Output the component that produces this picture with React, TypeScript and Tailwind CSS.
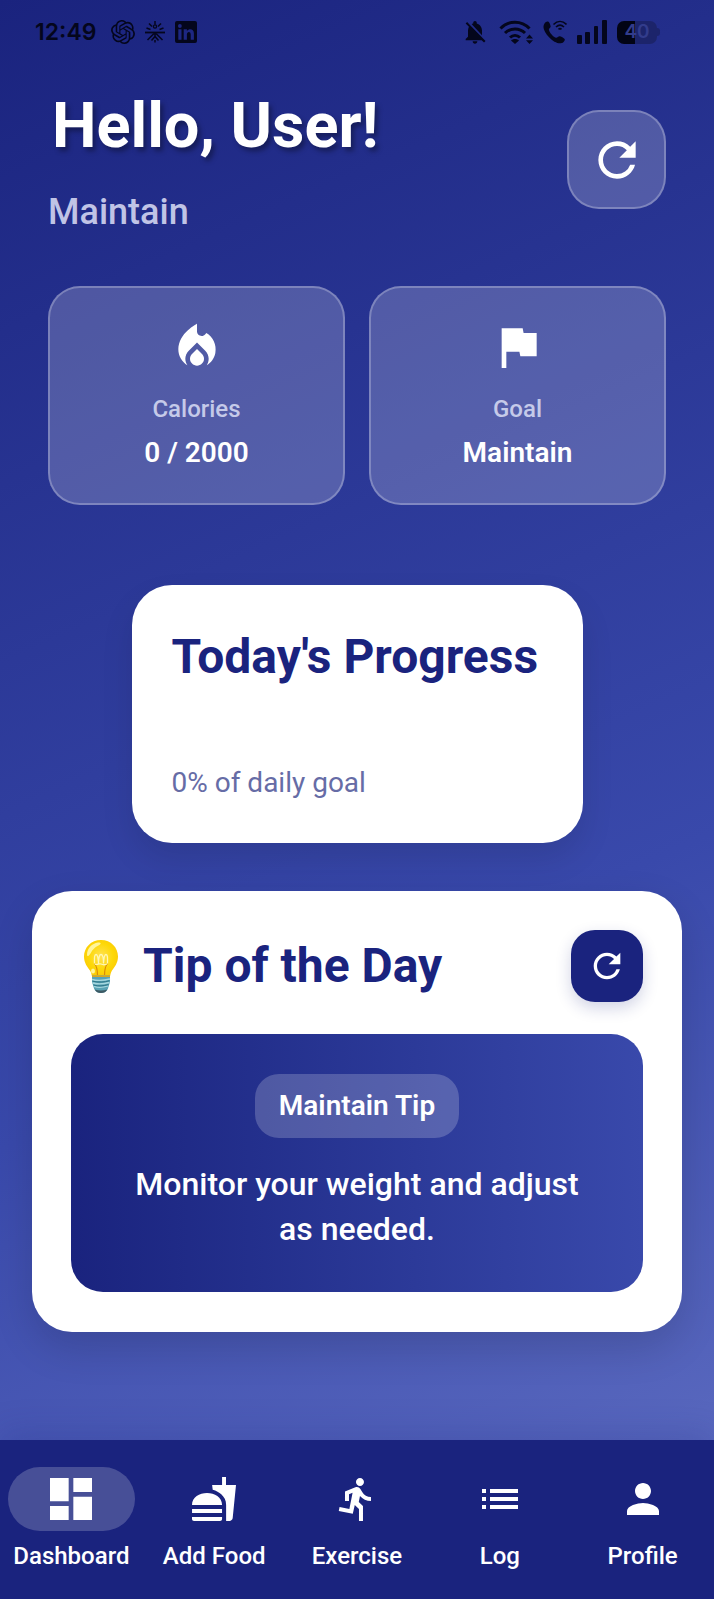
import React from "react";
import {
  MdDashboard,
  MdDirectionsRun,
  MdFastfood,
  MdFlag,
  MdList,
  MdLocalFireDepartment,
  MdNotificationsOff,
  MdPerson,
  MdRefresh,
} from "react-icons/md";
import { SiOpenai } from "react-icons/si";
import type { IconType } from "react-icons";

function SparkIcon() {
  return (
    <svg viewBox="0 0 20 22" className="h-[22px] w-5" fill="none" stroke="currentColor" aria-hidden="true">
      <path d="M0 11.500h20" strokeWidth="1.800" />
      <circle cx="10" cy="5.500" r="1.600" strokeWidth="1.300" />
      <path d="M10 0v3.500M10 11v4M10 19v2.500M1.500 7l4 1.500M18.500 7l-4 1.500M4 2.500l3 3M16 2.500l-3 3M9 12.500 2.500 19M11 12.500l6.500 6.500M6.500 19.500 10 15.500l3.500 4" strokeWidth="1.500" />
    </svg>
  );
}

function LinkedInIcon() {
  return (
    <svg viewBox="0 0 22 22" className="size-[22px]" aria-hidden="true">
      <path
        fill="currentColor"
        fillRule="evenodd"
        d="M2 0h18a2 2 0 0 1 2 2v18a2 2 0 0 1-2 2H2a2 2 0 0 1-2-2V2a2 2 0 0 1 2-2Zm1.300 8.300v10.500h3.200V8.300ZM4.900 3.100a1.900 1.900 0 1 0 0 3.800 1.900 1.900 0 0 0 0-3.800ZM8.700 8.300v10.500h3.200v-5.300c0-3.200 3.800-3.400 3.800 0v5.300h3.200v-6.400c0-5-5-5-7-2.500V8.300Z"
      />
    </svg>
  );
}

function WifiIcon() {
  return (
    <svg viewBox="0 0 34 24" className="h-6 w-[34px]" fill="none" stroke="currentColor" strokeWidth="3" aria-hidden="true">
      <path d="M1.500 8.500c8-8.500 21-8.500 29 0M6 13c5.500-5.500 14.500-5.500 20 0M11 17.500c3-2.800 7-2.800 10 0" />
      <path d="M12 20.500c2-2 6-2 8 0L16 24Z" fill="currentColor" stroke="none" />
      <path d="m27 18.500 3.500-4 3.500 4ZM27 20.300l3.500 3.700 3.500-3.700Z" fill="currentColor" stroke="none" />
    </svg>
  );
}

function CallIcon() {
  return (
    <svg viewBox="0 0 24 24" className="size-6" aria-hidden="true">
      <path
        fill="currentColor"
        d="M1.500 3.500c1-1.400 2.800-2.500 4.200-1.500.8.600 1.900 3.500 2 4.500.1 1.300-2 2-1.800 3.200.5 2.800 4 6.800 7 8 1.300.4 2.500-1.700 3.800-1.500 1.200.2 4.300 1.700 4.900 2.700.8 1.500-1.200 3.700-2.800 4.200C11.500 25 .3 13 .5 6.500c0-1 .4-2.200 1-3Z"
      />
      <path d="M10.500 4.500c4-4 9-4 13 0M13 7c2.500-2.400 5.500-2.400 8 0M15.500 9.300c1-.9 2-.9 3 0" fill="none" stroke="currentColor" strokeWidth="1.600" />
    </svg>
  );
}

function SignalIcon() {
  return (
    <svg viewBox="0 0 30 24" className="h-6 w-[30px]" fill="currentColor" aria-hidden="true">
      <rect x="0" y="15" width="5" height="9" rx="1" />
      <rect x="8" y="12" width="5" height="12" rx="1" />
      <rect x="17" y="6" width="4" height="18" rx="1" />
      <rect x="25" y="0" width="5" height="24" rx="1" />
    </svg>
  );
}

function BulbIcon() {
  return (
    <svg viewBox="0 0 34 53" className="h-[53px] w-[34px]" role="img" aria-label="Light bulb">
      <defs>
        <radialGradient id="glass" cx="50%" cy="45%" r="60%">
          <stop offset="0" stopColor="#ffe254" />
          <stop offset="0.600" stopColor="#fdd807" />
          <stop offset="1" stopColor="#fbc705" />
        </radialGradient>
      </defs>
      <path d="M17 0C7 0 0 7.500 0 16.500 0 23 3.500 27 6 30.500c1.200 1.800 1.600 4 2 6h18c.4-2 .8-4.200 2-6 2.500-3.500 6-7.500 6-14C34 7.500 27 0 17 0Z" fill="url(#glass)" />
      <path d="M3 15C3 8 8 3.500 14 2.500c3-.4 3.500 1.500 1 2.700C11 7 9 9 6.500 13.500 5 16 3.200 17 3 15Z" fill="#fff59b" />
      <ellipse cx="9" cy="31" rx="2" ry="2.500" fill="#fff59b" />
      <path d="M13.500 35c0-6-1-9-3-11.500M20.500 35c0-6 1-9 3-11.500" fill="none" stroke="#d98a09" strokeWidth="1.200" />
      <path d="M10.500 23.500c0-4-.5-9 1.500-9s2.500 9 2.500 9 0-9 2.500-9 2.500 9 2.500 9 .5-9 2.500-9 1.500 5 1.500 9M11 24c2 1.500 4-1 6 0s4 1 6 0" fill="none" stroke="#fff7b5" strokeWidth="1.300" />
      <path d="M8 35.500h18v6.500l-2 6.500c-1 3-4 4.500-7 4.500s-6-1.500-7-4.500L8 42Z" fill="#59a3b5" />
      <path d="M8 35.500h18v1.500H8Z" fill="#d9a520" />
      <path d="M8 39.500c6 1.500 12 1 18-.5M8.500 43c6 1.500 11 1 17-.5M10 46.500c5 1.500 9 1 14-.5" fill="none" stroke="#a7d8df" strokeWidth="1.300" />
      <path d="M8.500 41.200c6 1.500 12 1 17-.5M9.500 45c5 1.500 10 1 15-.5" fill="none" stroke="#2d7588" strokeWidth="1" />
      <path d="M10.800 49.500c4 1.200 8.400 1.200 12.400 0-1 2.500-3.500 3.500-6.200 3.500s-5.200-1-6.200-3.500Z" fill="#3e5963" />
    </svg>
  );
}

function StatusBar() {
  return (
    <div className="flex h-16 items-center justify-between pr-[54px] pl-[35px] text-[#04061c]">
      <div className="flex items-center">
        <span className="w-[76px] font-[Inter,sans-serif] text-[23px] leading-6 font-semibold">12:49</span>
        <div className="flex items-center gap-[10px]">
          <SiOpenai className="size-6" aria-hidden="true" />
          <SparkIcon />
          <LinkedInIcon />
        </div>
      </div>
      <div className="flex items-center gap-[10px]">
        <MdNotificationsOff className="size-7" aria-hidden="true" />
        <WifiIcon />
        <CallIcon />
        <SignalIcon />
        <div className="flex items-center">
          <div className="flex h-[23px] w-10 items-center justify-center rounded-[7px] bg-linear-to-r from-[#020415] from-45% to-[#1c246b] to-45% font-[Inter,sans-serif] text-[19px] leading-5 font-semibold text-[#323c8c]">
            40
          </div>
          <div className="h-2 w-[3px] rounded-r bg-[#1c246b]" />
        </div>
      </div>
    </div>
  );
}

function StatCard({ icon: Icon, label, value }: { icon: IconType; label: string; value: string }) {
  return (
    <div className="flex flex-1 flex-col items-center rounded-[32px] border-2 border-white/25 bg-white/20 px-6 pt-[31px] pb-[30px]">
      <Icon className="size-14" aria-hidden="true" />
      <span className="mt-[18px] text-2xl leading-8 font-medium text-[#c5cae9]">{label}</span>
      <span className="mt-2 text-[28px] leading-10 font-semibold">{value}</span>
    </div>
  );
}

const tabs: { label: string; icon: IconType; size: string }[] = [
  { label: "Dashboard", icon: MdDashboard, size: "size-14" },
  { label: "Add Food", icon: MdFastfood, size: "size-12" },
  { label: "Exercise", icon: MdDirectionsRun, size: "size-12" },
  { label: "Log", icon: MdList, size: "size-12" },
  { label: "Profile", icon: MdPerson, size: "size-12" },
];

export default function App() {
  return (
    <div className="flex min-h-screen flex-col bg-[linear-gradient(156deg,#1a237e_0%,#3949ab_60%,#5c6bc0_95%)] font-[Roboto,sans-serif] text-white">
      <StatusBar />
      <main className="flex flex-1 flex-col">
        <header className="flex items-start justify-between px-12 pt-[22px]">
          <div>
            <h1 className="pl-1 text-[63px] leading-20 font-bold text-shadow-[3px_4px_5px_rgba(0,0,0,0.35)]">Hello, User!</h1>
            <p className="mt-[22px] text-4xl leading-12 font-medium text-[#c0c4e6]">Maintain</p>
          </div>
          <button
            type="button"
            aria-label="Refresh dashboard"
            className="mt-6 flex size-[99px] items-center justify-center rounded-[32px] border-2 border-white/25 bg-white/20"
          >
            <MdRefresh className="size-14" aria-hidden="true" />
          </button>
        </header>

        <section className="mt-[50px] flex gap-6 px-12">
          <StatCard icon={MdLocalFireDepartment} label="Calories" value="0 / 2000" />
          <StatCard icon={MdFlag} label="Goal" value="Maintain" />
        </section>

        <section className="mt-20 w-[451px] max-w-full self-center rounded-[40px] bg-white p-10 shadow-[0_16px_32px_rgba(0,0,0,0.1)]">
          <h2 className="text-[48px] leading-16 font-bold text-[#1a237e]">Today's Progress</h2>
          <p className="mt-[74px] text-[28px] leading-10 text-[#666ca6]">0% of daily goal</p>
        </section>

        <section className="mx-8 mt-12 mb-10 rounded-[40px] bg-white px-[39px] pt-[39px] pb-10 shadow-[0_16px_40px_rgba(0,0,0,0.14)]">
          <div className="flex items-center justify-between">
            <h2 className="flex items-center gap-[25px] pl-[13px] text-[48px] leading-16 font-bold text-[#1a237e]">
              <BulbIcon />
              Tip of the Day
            </h2>
            <button
              type="button"
              aria-label="Show another tip"
              className="flex size-[72px] items-center justify-center rounded-3xl bg-[#1a237e] shadow-[0_6px_16px_rgba(26,35,126,0.2)]"
            >
              <MdRefresh className="size-10" aria-hidden="true" />
            </button>
          </div>
          <div className="mt-8 flex flex-col items-center rounded-[32px] bg-linear-to-r from-[#1a237e] to-[#3949ab] px-12 pt-10 pb-10 text-center">
            <span className="flex h-16 items-center rounded-3xl bg-white/20 px-6 text-[28px] font-semibold">Maintain Tip</span>
            <p className="mt-6 text-[32px] leading-[45px] font-medium">Monitor your weight and adjust as needed.</p>
          </div>
        </section>
      </main>

      <nav className="grid h-[159px] grid-cols-5 bg-[#1a237e] pt-[27px] shadow-[0_-8px_32px_rgba(26,35,126,0.2)]">
        {tabs.map(({ label, icon: Icon, size }, index) => (
          <a
            key={label}
            href={`#${label.toLowerCase().replace(" ", "-")}`}
            aria-current={index === 0 ? "page" : undefined}
            className="flex flex-col items-center px-2"
          >
            <span className={index === 0 ? "flex h-16 w-full items-center justify-center rounded-full bg-white/20" : "flex h-16 w-full items-center justify-center"}>
              <Icon className={size} aria-hidden="true" />
            </span>
            <span className="mt-[7px] text-2xl leading-9 font-medium whitespace-nowrap">{label}</span>
          </a>
        ))}
      </nav>
    </div>
  );
}
